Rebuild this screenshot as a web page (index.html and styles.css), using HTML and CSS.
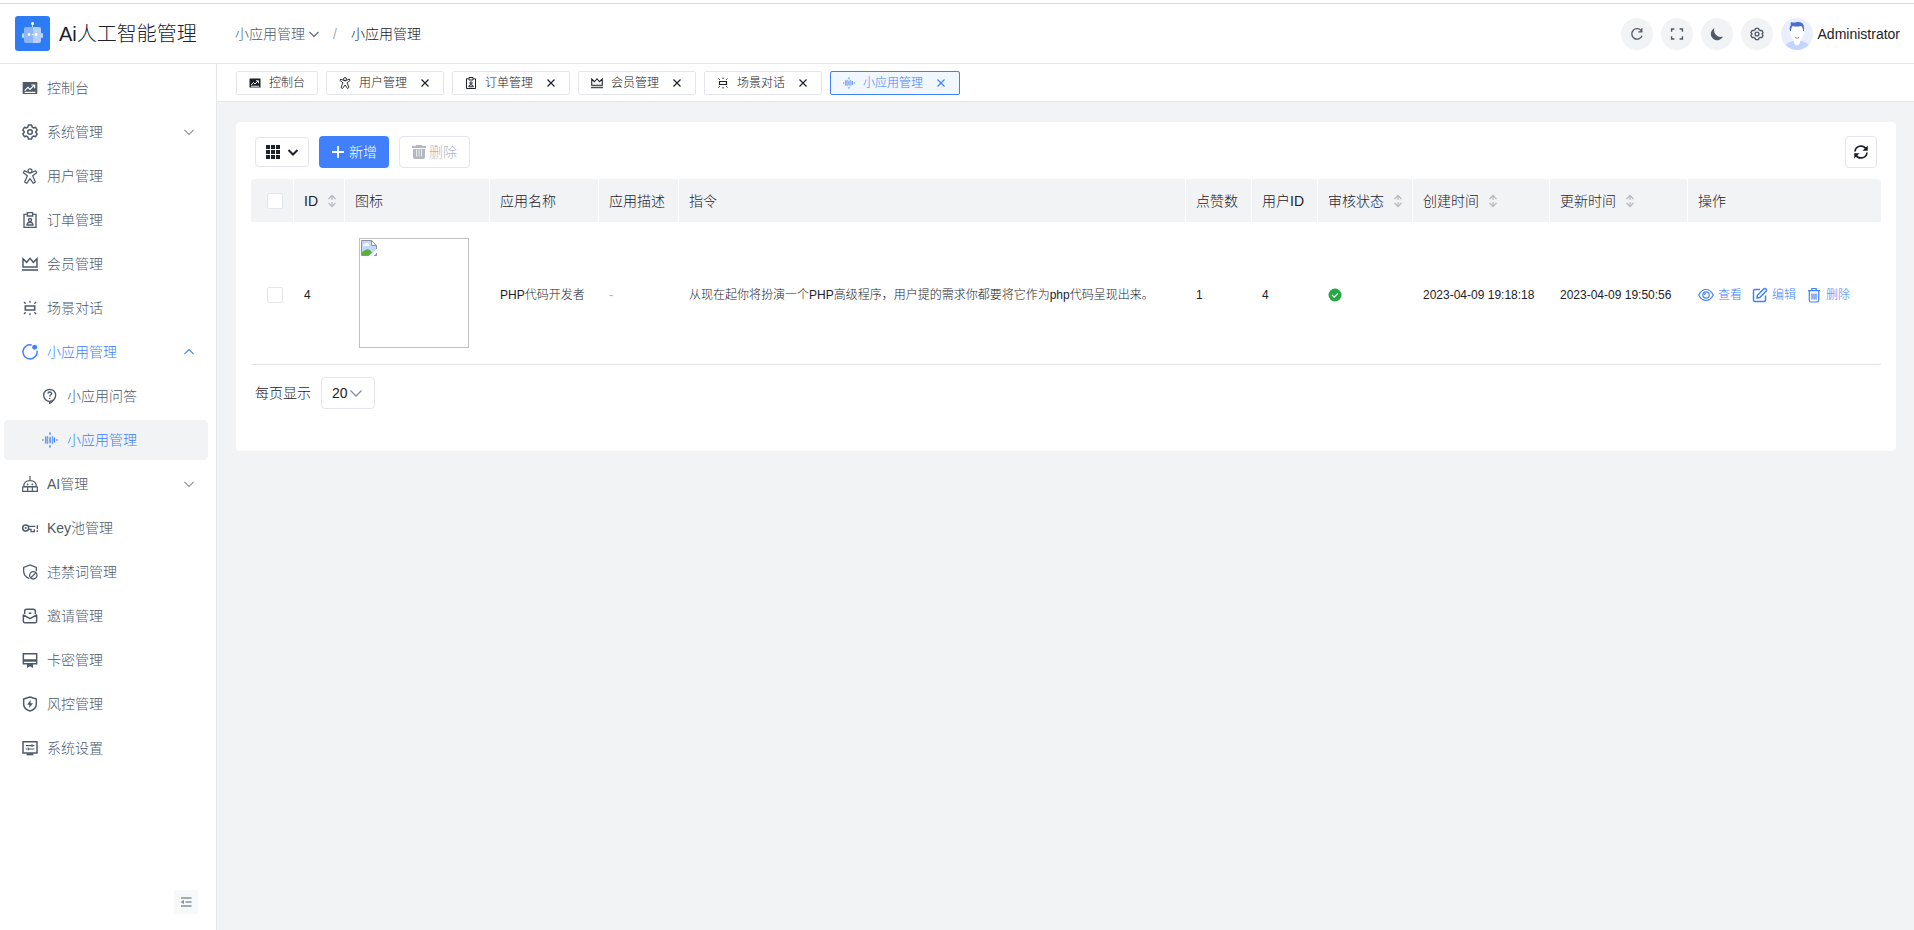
FILE: index.html
```html
<!DOCTYPE html>
<html lang="zh-CN">
<head>
<meta charset="utf-8">
<title>小应用管理</title>
<link rel="stylesheet" href="styles.css">
</head>
<body>
<svg class="defs" aria-hidden="true">
  <symbol id="i-dash" viewBox="0 0 24 24"><path fill="currentColor" d="M2 3h20q1 0 1 1v16q0 1-1 1H2q-1 0-1-1V4q0-1 1-1z"/><path fill="none" stroke="#fff" stroke-width="1.800" d="M4 16l5-5 3 3 6-6M14 7.500h5v5M4 18.500h16"/></symbol>
  <symbol id="i-gear" viewBox="0 0 24 24"><g fill="none" stroke="currentColor" stroke-width="2.200" stroke-linejoin="round"><path d="M9.600 1.500h4.800l.8 3.200 2 1.200 3.200-1 2.400 4.200-2.400 2.900 2.400 2.900-2.400 4.200-3.200-1-2 1.200-.8 3.200H9.600l-.8-3.200-2-1.200-3.200 1-2.400-4.200L3.600 12 1.200 9.100l2.400-4.200 3.200 1 2-1.200z"/><circle cx="12" cy="12" r="3.500"/></g></symbol>
  <symbol id="i-user" viewBox="0 0 24 24"><g fill="none" stroke="currentColor" stroke-width="1.800" stroke-linejoin="round"><circle cx="12" cy="4.200" r="3"/><path d="M8.500 6.500L3.500 4 2 7l6 4.500L4 21l3 2 5-7 5 7 3-2-4-9.500L22 7l-1.500-3-5 2.500q-3.500 2-7 0z"/></g></symbol>
  <symbol id="i-order" viewBox="0 0 24 24"><g fill="none" stroke="currentColor" stroke-width="2"><path d="M7 3.500H3V23h18V3.500h-4"/><path d="M8 1h8v5H8z"/><circle cx="12" cy="12" r="2.300"/><path d="M7.500 19.500q0-4 4.500-4t4.500 4z"/></g></symbol>
  <symbol id="i-crown" viewBox="0 0 24 24"><path fill="none" stroke="currentColor" stroke-width="2.200" d="M1.500 4v12.500h21V4l-5.500 5.500L12 3.500 7 9.500z"/><path fill="currentColor" opacity=".8" d="M0 19.500h24v3H0z"/></symbol>
  <symbol id="i-scene" viewBox="0 0 24 24"><path fill="none" stroke="currentColor" stroke-width="2.400" d="M5 9h14v6H5z"/><path fill="none" stroke="currentColor" stroke-width="2" d="M12 1v3M12 20v3M3 3l2.500 2.500M21 3l-2.500 2.500M3 21l2.500-2.500M21 21l-2.500-2.500"/></symbol>
  <symbol id="i-app" viewBox="0 0 24 24"><path fill="none" stroke="currentColor" stroke-width="2.200" d="M14.500 1.500A10.600 10.600 0 1 0 22.500 10"/><circle cx="19" cy="5" r="3.700" fill="currentColor"/></symbol>
  <symbol id="i-ask" viewBox="0 0 24 24"><g fill="none" stroke="currentColor" stroke-width="2"><circle cx="11.500" cy="11" r="9"/><path d="M8.800 8.500q.2-2.500 2.900-2.500t2.700 2.300c0 2-2.800 2-2.800 4.500M11.600 14.500v2"/><path d="M11.500 19.500v3.500q4-2 6-5"/></g></symbol>
  <symbol id="i-wave" viewBox="0 0 24 24"><g fill="none" stroke="currentColor" stroke-linecap="round"><path stroke-width="2" d="M12 8v8M12 1.500v2M12 20.500v2M5.700 7.500v9M18.500 9v6M1.500 11.500v1M22.500 11.500v1"/><path stroke-width="1.300" d="M8.500 6.500v11M15.500 6.500v11"/></g></symbol>
  <symbol id="i-robot" viewBox="0 0 24 24"><g fill="none" stroke="currentColor" stroke-width="1.800"><path d="M12 0v7M2.500 16q0-9 9.500-9t9.500 9zM1 16.500h22V23H1zM8.500 17v6M15.500 17v6"/></g><circle cx="8.500" cy="12.500" r="1.400" fill="currentColor"/><circle cx="15.500" cy="12.500" r="1.400" fill="currentColor"/></symbol>
  <symbol id="i-key" viewBox="0 0 24 24"><circle cx="5.500" cy="12" r="4.500" fill="none" stroke="currentColor" stroke-width="2.200"/><circle cx="5.500" cy="12" r="1.600" fill="currentColor"/><path fill="none" stroke="currentColor" stroke-width="2" d="M9.500 9.500H20M10 14h3.500v3.500h5V14M23 8v5.500M23 15.500V18"/></symbol>
  <symbol id="i-ban" viewBox="0 0 24 24"><g fill="none" stroke="currentColor" stroke-width="1.900"><path d="M11 22C5 19.500 2.500 16 2.500 11V5L12 1.500 21.500 5v6"/><circle cx="17" cy="17" r="5.500"/><path d="M13 21l8-8"/></g></symbol>
  <symbol id="i-invite" viewBox="0 0 24 24"><g fill="none" stroke="currentColor" stroke-width="2.200" stroke-linejoin="round"><path d="M4 9V5q0-3 3-3h10q3 0 3 3v4M2 10.500L12 16l10-5.500V20q0 2-2 2H4q-2 0-2-2zM10 8h4"/></g></symbol>
  <symbol id="i-card" viewBox="0 0 24 24"><path fill="none" stroke="currentColor" stroke-width="2.200" d="M2 2.500h20v15H2z"/><path fill="currentColor" d="M2 11h20v3.500H2zM7.500 17h9v7L12 21.500 7.500 24z"/></symbol>
  <symbol id="i-risk" viewBox="0 0 24 24"><path fill="none" stroke="currentColor" stroke-width="2.200" stroke-linejoin="round" d="M12 1.500L21.500 4.500V12q0 7.500-9.500 10.500Q2.500 19.500 2.500 12V4.500z"/><path fill="currentColor" d="M13 6l-5.500 7H11v5l5.500-7H13z"/></symbol>
  <symbol id="i-set" viewBox="0 0 24 24"><path fill="none" stroke="currentColor" stroke-width="2.200" d="M1.500 2.500h21v17h-21z"/><path fill="none" stroke="currentColor" stroke-width="1.700" d="M6 8.500h8M16 8.500h2.500M15 6.500v4M5.500 13.500H8M10 13.500h8.500M9.500 11.500v4"/><path fill="currentColor" d="M7 20h10v3H7z"/></symbol>
  <symbol id="i-down" viewBox="0 0 12 12"><path fill="none" stroke="currentColor" stroke-width="1.300" d="M.5 3.500L6 9l5.500-5.500"/></symbol>
  <symbol id="i-up" viewBox="0 0 12 12"><path fill="none" stroke="currentColor" stroke-width="1.300" d="M.5 8.500L6 3l5.500 5.500"/></symbol>
  <symbol id="i-x" viewBox="0 0 12 12"><path fill="none" stroke="currentColor" stroke-width="1.200" d="M2.500 2.500l7 7M9.500 2.500l-7 7"/></symbol>
  <symbol id="i-sort" viewBox="0 0 10 14"><path fill="none" stroke="currentColor" stroke-width="1.300" d="M5 1.500V6M1.500 5L5 1.500 8.500 5M5 12.500V8M1.500 9L5 12.500 8.500 9"/></symbol>
</svg>

<header class="header">
  <div class="brand">
    <svg class="logo" viewBox="0 0 35 35"><rect width="35" height="35" rx="3" fill="#2d7cf6"/><g fill="#c0d7fd"><path d="M9 13q0-2 2-2h6.500v16H11q-2 0-2-2z" fill="#8db6fa"/><path d="M17.500 11H24q2 0 2 2v12q0 2-2 2h-6.500z" fill="#b6d0fc"/><rect x="7" y="17" width="2" height="5" rx="1"/><rect x="26" y="17" width="2" height="5" rx="1"/><rect x="17" y="8" width="1" height="3"/></g><g fill="#fff"><circle cx="17.500" cy="7.500" r="1.500"/><circle cx="14" cy="18.500" r="1.400"/><circle cx="21" cy="18.500" r="1.400"/><circle cx="17.500" cy="18.500" r=".7"/></g></svg>
    <h1 class="title">Ai人工智能管理</h1>
  </div>
  <nav class="crumbs" aria-label="路径">
    <a href="#" class="crumb">小应用管理<svg class="ic10"><use href="#i-down"/></svg></a>
    <span class="slash">/</span>
    <span class="here">小应用管理</span>
  </nav>
  <div class="tools">
    <button class="round" aria-label="刷新"><svg viewBox="0 0 16 16"><path fill="none" stroke="currentColor" stroke-width="1.500" d="M13 4.500A6 6 0 1 0 13.700 10M13.500 1.500v4h-4"/></svg></button>
    <button class="round" aria-label="全屏"><svg viewBox="0 0 16 16"><path fill="none" stroke="currentColor" stroke-width="1.600" d="M1.800 5.500V2.300H5M11 2.300h3.200v3.200M14.200 10.500v3.200H11M5 13.700H1.800v-3.200"/></svg></button>
    <button class="round" aria-label="深色模式"><svg viewBox="0 0 16 16"><path fill="currentColor" d="M5 1.500A7.500 7.500 0 0 0 14.800 10.800 7.200 7.200 0 1 1 5 1.500z"/></svg></button>
    <button class="round" aria-label="设置"><svg viewBox="0 0 16 16"><g fill="none" stroke="currentColor" stroke-width="1.500" stroke-linejoin="round"><path d="M6.500 1.500h3l.8 1.800 1.200.7 2-.2L15 6.400 13.700 8 15 9.600l-1.500 2.600-2-.2-1.200.7-.8 1.800h-3l-.8-1.800-1.200-.7-2 .2L1 9.600 2.300 8 1 6.400l1.500-2.600 2 .2 1.200-.7z"/><circle cx="8" cy="8" r="2.200"/></g></svg></button>
    <button class="account">
      <svg class="avatar" viewBox="0 0 32 32"><defs><clipPath id="c"><circle cx="16" cy="16" r="16"/></clipPath></defs><g clip-path="url(#c)"><path fill="#e9effe" d="M0 0h32v32H0z"/><path fill="#c5d4fd" d="M2 32q1-7 10-9h8q9 2 10 9z"/><path fill="#fff" d="M9 12q-1 4 1 5 .5 4 3 6v2q3 5 6 0v-2q2.500-2 3-6 2-1 1-5l-3-5h-8z"/><path fill="#4a6fd0" d="M9 13q-1-4 1-6-1-1 0-3 2 1 6 0 7-1 7 6v3h-1q0-4-2-5-5 1-8 0-2 1-2 5z"/><path fill="none" stroke="#8a8fa8" d="M14 19.500q2 1.500 4 0"/></g></svg>
      <span>Administrator</span>
    </button>
  </div>
</header>

<div class="body">
  <aside class="side">
    <nav class="menu" aria-label="主菜单">
      <a href="#" class="item"><svg class="ic16"><use href="#i-dash"/></svg><span>控制台</span></a>
      <a href="#" class="item"><svg class="ic16"><use href="#i-gear"/></svg><span>系统管理</span><svg class="ic10 arrow"><use href="#i-down"/></svg></a>
      <a href="#" class="item"><svg class="ic16"><use href="#i-user"/></svg><span>用户管理</span></a>
      <a href="#" class="item"><svg class="ic16"><use href="#i-order"/></svg><span>订单管理</span></a>
      <a href="#" class="item"><svg class="ic16"><use href="#i-crown"/></svg><span>会员管理</span></a>
      <a href="#" class="item"><svg class="ic16"><use href="#i-scene"/></svg><span>场景对话</span></a>
      <a href="#" class="item open"><svg class="ic16"><use href="#i-app"/></svg><span>小应用管理</span><svg class="ic10 arrow"><use href="#i-up"/></svg></a>
      <a href="#" class="item sub"><svg class="ic16"><use href="#i-ask"/></svg><span>小应用问答</span></a>
      <a href="#" class="item sub active" aria-current="page"><svg class="ic16"><use href="#i-wave"/></svg><span>小应用管理</span></a>
      <a href="#" class="item"><svg class="ic16"><use href="#i-robot"/></svg><span>AI管理</span><svg class="ic10 arrow"><use href="#i-down"/></svg></a>
      <a href="#" class="item"><svg class="ic16"><use href="#i-key"/></svg><span>Key池管理</span></a>
      <a href="#" class="item"><svg class="ic16"><use href="#i-ban"/></svg><span>违禁词管理</span></a>
      <a href="#" class="item"><svg class="ic16"><use href="#i-invite"/></svg><span>邀请管理</span></a>
      <a href="#" class="item"><svg class="ic16"><use href="#i-card"/></svg><span>卡密管理</span></a>
      <a href="#" class="item"><svg class="ic16"><use href="#i-risk"/></svg><span>风控管理</span></a>
      <a href="#" class="item"><svg class="ic16"><use href="#i-set"/></svg><span>系统设置</span></a>
    </nav>
    <button class="fold" aria-label="收起菜单"><svg viewBox="0 0 12 12"><path fill="none" stroke="currentColor" stroke-width="1.300" d="M1 2h10.500M5.500 6h6M1 10h10.500"/><path fill="currentColor" d="M.5 6L4 4v4z"/></svg></button>
  </aside>

  <main class="main">
    <nav class="tabs" aria-label="标签页">
      <div class="tab"><svg class="ic12"><use href="#i-dash"/></svg><a href="#">控制台</a></div>
      <div class="tab"><svg class="ic12"><use href="#i-user"/></svg><a href="#">用户管理</a><button class="close" aria-label="关闭"><svg class="ic12"><use href="#i-x"/></svg></button></div>
      <div class="tab"><svg class="ic12"><use href="#i-order"/></svg><a href="#">订单管理</a><button class="close" aria-label="关闭"><svg class="ic12"><use href="#i-x"/></svg></button></div>
      <div class="tab"><svg class="ic12"><use href="#i-crown"/></svg><a href="#">会员管理</a><button class="close" aria-label="关闭"><svg class="ic12"><use href="#i-x"/></svg></button></div>
      <div class="tab"><svg class="ic12"><use href="#i-scene"/></svg><a href="#">场景对话</a><button class="close" aria-label="关闭"><svg class="ic12"><use href="#i-x"/></svg></button></div>
      <div class="tab current"><svg class="ic12"><use href="#i-wave"/></svg><a href="#">小应用管理</a><button class="close" aria-label="关闭"><svg class="ic12"><use href="#i-x"/></svg></button></div>
    </nav>

    <section class="card">
      <div class="bar">
        <button class="btn cols" aria-label="显示列"><svg class="ic16" viewBox="0 0 16 16"><path fill="currentColor" d="M1 1h4v4H1zM6 1h4v4H6zM11 1h4v4h-4zM1 6h4v4H1zM6 6h4v4H6zM11 6h4v4h-4zM1 11h4v4H1zM6 11h4v4H6zM11 11h4v4h-4z"/></svg><svg class="ic12" viewBox="0 0 12 12"><path fill="none" stroke="currentColor" stroke-width="2" d="M1.500 4L6 8.500 10.500 4"/></svg></button>
        <button class="btn primary"><svg class="ic14" viewBox="0 0 14 14"><path fill="none" stroke="currentColor" stroke-width="1.800" d="M7 1v12M1 7h12"/></svg>新增</button>
        <button class="btn off" disabled><svg class="ic14" viewBox="0 0 14 14"><path fill="currentColor" d="M4 0h6v1h4v2H0V1h4zM1 4h12v8q0 2-2 2H3q-2 0-2-2z"/><path stroke="#fff" fill="none" stroke-width=".7" d="M4.500 4.500v7M7 4.500v7M9.500 4.500v7"/></svg>删除</button>
        <button class="btn reload" aria-label="刷新列表"><svg class="ic16" viewBox="0 0 16 16"><g fill="none" stroke="currentColor" stroke-width="1.700"><path d="M2 7.500A6 6 0 0 1 13 4.800M14 8.500A6 6 0 0 1 3 11.200"/></g><path fill="currentColor" d="M14.800 1.500v5.300H9.500zM1.200 14.500V9.200h5.300z"/></svg></button>
      </div>

      <table class="table">
        <colgroup><col class="w1"><col class="w2"><col class="w3"><col class="w4"><col class="w5"><col><col class="w6"><col class="w6"><col class="w7"><col class="w8"><col class="w9"><col class="w10"></colgroup>
        <thead>
          <tr>
            <th class="pick"><input type="checkbox" class="check" aria-label="全选"></th>
            <th><button class="sort">ID<svg><use href="#i-sort"/></svg></button></th>
            <th>图标</th>
            <th>应用名称</th>
            <th>应用描述</th>
            <th>指令</th>
            <th>点赞数</th>
            <th>用户ID</th>
            <th><button class="sort">审核状态<svg><use href="#i-sort"/></svg></button></th>
            <th><button class="sort">创建时间<svg><use href="#i-sort"/></svg></button></th>
            <th><button class="sort">更新时间<svg><use href="#i-sort"/></svg></button></th>
            <th>操作</th>
          </tr>
        </thead>
        <tbody>
          <tr>
            <td class="pick"><input type="checkbox" class="check" aria-label="选择 4"></td>
            <td>4</td>
            <td class="thumb"><div class="pic"><svg viewBox="0 0 16 16"><path fill="#c3d8f8" d="M.5.500h10l5 5v10H.5z"/><path fill="#fff" d="M2 6q0-2 2-2 2-2 4 0 1 2 0 2z"/><path fill="#5aae3a" d="M.5 15.500V13Q7 6 11 12.500l-3 3zM13.500 15.500h2V13z"/><path fill="#fff" d="M8 16l8-7v4l-3.500 3z"/><path fill="#fff" stroke="#8e959e" d="M10.500.500v5h5z"/><path fill="none" stroke="#8e959e" d="M8 15.500H.5V.500h10l5 5V9M15.500 13v2.500H13"/></svg></div></td>
            <td>PHP代码开发者</td>
            <td class="dim">-</td>
            <td>从现在起你将扮演一个PHP高级程序，用户提的需求你都要将它作为php代码呈现出来。</td>
            <td>1</td>
            <td>4</td>
            <td><svg class="ok" viewBox="0 0 14 14" role="img" aria-label="通过"><circle cx="7" cy="7" r="6.500" fill="#28a745"/><path fill="none" stroke="#fff" stroke-width="1.200" d="M4 7l2.200 2.200 3.800-3.800"/></svg></td>
            <td>2023-04-09 19:18:18</td>
            <td>2023-04-09 19:50:56</td>
            <td>
              <div class="acts">
                <a href="#"><svg class="ic16" viewBox="0 0 16 16"><g fill="none" stroke="currentColor" stroke-width="1.200"><path d="M.7 8Q3.500 2.500 8 2.500T15.300 8Q12.500 13.500 8 13.500T.7 8z"/><circle cx="8" cy="8" r="3.200"/><path d="M6.500 8Q6.500 6.500 8 6.500"/></g></svg>查看</a>
                <a href="#"><svg class="ic16" viewBox="0 0 16 16"><g fill="none" stroke="currentColor" stroke-width="1.500" stroke-linejoin="round"><path d="M8 2.500H3q-1.500 0-1.500 1.500v9q0 1.500 1.500 1.500h9q1.500 0 1.500-1.500V8.500"/><path d="M5.500 8.200L12 1.700q1-.7 2 .3t.3 2L7.800 10.500l-2.800.5z"/></g></svg>编辑</a>
                <a href="#"><svg class="ic16" viewBox="0 0 16 16"><g fill="none" stroke="currentColor" stroke-width="1.200"><path d="M3.300 4v9.500q0 1.500 1.500 1.500h6.400q1.500 0 1.500-1.500V4M2 3.700h12M5.800 3.500V1.500h4.400v2M6 6.500v6M8 6.500v6M10 6.500v6"/></g></svg>删除</a>
              </div>
            </td>
          </tr>
        </tbody>
      </table>

      <div class="pager">
        <label for="size">每页显示</label>
        <span class="pick-size"><select id="size"><option>20</option><option>50</option></select><svg class="ic12"><use href="#i-down"/></svg></span>
      </div>
    </section>
  </main>
</div>
</body>
</html>
```

FILE: styles.css
```css
* { box-sizing: border-box; }

body {
  margin: 0;
  min-height: 100vh;
  display: flex;
  flex-direction: column;
  padding-top: 3px;
  background: #fff;
  color: #1d2129;
  font-family: "Liberation Sans", "Noto Sans CJK SC", sans-serif;
  font-size: 14px;
  font-weight: 300;
  line-height: 20px;
}

a { color: inherit; text-decoration: none; }

button, select, input { font: inherit; color: inherit; margin: 0; }

button {
  display: flex;
  align-items: center;
  justify-content: center;
  padding: 0;
  border: 0;
  background: none;
  cursor: pointer;
}

svg { flex: none; display: block; }

.defs { position: absolute; width: 0; height: 0; }
.ic10 { width: 10px; height: 10px; }
.ic12 { width: 12px; height: 12px; }
.ic14 { width: 14px; height: 14px; }
.ic16 { width: 16px; height: 16px; }

/* header */
.header {
  display: flex;
  align-items: center;
  height: 61px;
  padding: 0 14px 0 15px;
  border-top: 1px solid #dadbdd;
  border-bottom: 1px solid #e5e6eb;
}

.brand {
  display: flex;
  align-items: center;
  gap: 9px;
  width: 220px;
}

.logo { width: 35px; height: 35px; }

.title {
  margin: 0;
  font-size: 20px;
  font-weight: 300;
  line-height: 28px;
}

.crumbs { display: flex; align-items: center; color: #4e5969; }
.crumb { display: flex; align-items: center; gap: 4px; }
.slash { width: 32px; text-align: center; color: #a9aeb8; }
.here { color: #1d2129; }

.tools { display: flex; gap: 8px; margin-left: auto; }

.round {
  width: 32px;
  height: 32px;
  border-radius: 50%;
  background: #f2f3f5;
  color: #4e5969;
}

.round svg { width: 14px; height: 14px; }
.account { gap: 5px; }
.avatar { width: 32px; height: 32px; }

/* layout */
.body { display: flex; flex: 1; }

.side {
  display: flex;
  flex-direction: column;
  width: 217px;
  flex: none;
  padding: 4px 8px 16px 4px;
  border-right: 1px solid #e5e6eb;
  color: #4e5969;
}

.menu { display: flex; flex-direction: column; gap: 4px; }

.item {
  display: flex;
  align-items: center;
  gap: 9px;
  height: 40px;
  padding: 0 14px 0 18px;
  border-radius: 4px;
}

.sub { padding-left: 38px; }
.arrow { margin-left: auto; color: #86909c; }
.open, .active, .open .arrow { color: #4080ff; }
.active { background: #f2f3f5; }

.fold {
  width: 24px;
  height: 24px;
  margin: auto 10px 0 auto;
  border-radius: 2px;
  background: #f7f8fa;
  color: #86909c;
}

.fold svg { width: 12px; height: 12px; }

.main { flex: 1; min-width: 0; background: #f2f3f5; }

/* tabs */
.tabs {
  display: flex;
  align-items: center;
  gap: 8px;
  height: 38px;
  padding: 0 19px;
  background: #fff;
  border-bottom: 1px solid #e5e6eb;
  font-size: 12px;
}

.tab {
  display: flex;
  align-items: center;
  gap: 8px;
  height: 24px;
  padding: 0 12px;
  border: 1px solid #e5e6eb;
  border-radius: 2px;
}

.close { margin-left: 4px; }
.current { border-color: #4080ff; background: #f0f7ff; color: #4080ff; }

/* card */
.card {
  margin: 20px 18px 20px 19px;
  padding: 14px 15px 42px;
  border-radius: 4px;
  background: #fff;
}

.bar {
  display: flex;
  align-items: center;
  gap: 10px;
  padding: 0 4px;
}

.btn {
  height: 32px;
  gap: 3px;
  padding: 0 12px;
  border: 1px solid #e5e6eb;
  border-radius: 4px;
  background: #fff;
}

.cols { width: 54px; height: 30px; gap: 6px; padding: 0; }
.primary { gap: 4px; border: 0; background: #4080ff; color: #fff; }
.off { color: #b4b7bd; cursor: default; }
.reload { width: 32px; margin-left: auto; padding: 0; }

/* table */
.table {
  width: 100%;
  margin-top: 11px;
  border-collapse: separate;
  border-spacing: 0;
  table-layout: fixed;
}

.w1 { width: 43px; }
.w2 { width: 51px; }
.w3 { width: 145px; }
.w4 { width: 109px; }
.w5 { width: 80px; }
.w6 { width: 66px; }
.w7 { width: 95px; }
.w8 { width: 137px; }
.w9 { width: 138px; }
.w10 { width: 193px; }

.table th {
  height: 43px;
  padding: 0 0 0 10px;
  border-right: 1px solid #fff;
  background: #f2f3f5;
  font-weight: 300;
  text-align: left;
  white-space: nowrap;
}

.table th:first-child { border-top-left-radius: 4px; }
.table th:last-child { border-top-right-radius: 4px; border-right: 0; }

.table td {
  height: 143px;
  padding: 3px 0 0 10px;
  border-bottom: 1px solid #e5e6eb;
  font-size: 12px;
  white-space: nowrap;
}

.table .pick { padding-left: 16px; }
.table .thumb { padding: 0 0 0 14px; }
.dim { color: #a9aeb8; }

.check {
  display: block;
  width: 16px;
  height: 16px;
  appearance: none;
  border: 1px solid #e5e6eb;
  border-radius: 2px;
  background: #fff;
}

.sort { gap: 9px; }
.sort svg { width: 10px; height: 14px; color: #b8bbc1; }

.pic {
  width: 110px;
  height: 110px;
  padding: 1px;
  border: 1px solid #c0c0c0;
}

.pic svg { width: 16px; height: 16px; }
.ok { width: 14px; height: 14px; }

.acts { display: flex; gap: 10px; color: #4080ff; }
.acts a { display: flex; align-items: center; gap: 4px; }

/* pager */
.pager {
  display: flex;
  align-items: center;
  gap: 10px;
  padding: 12px 4px 0;
}

.pick-size { position: relative; }

.pick-size select {
  display: block;
  width: 54px;
  height: 32px;
  padding: 0 10px;
  appearance: none;
  border: 1px solid #e5e6eb;
  border-radius: 4px;
  background: #fff;
}

.pick-size svg {
  position: absolute;
  top: 10px;
  right: 13px;
  color: #86909c;
  pointer-events: none;
}
```
